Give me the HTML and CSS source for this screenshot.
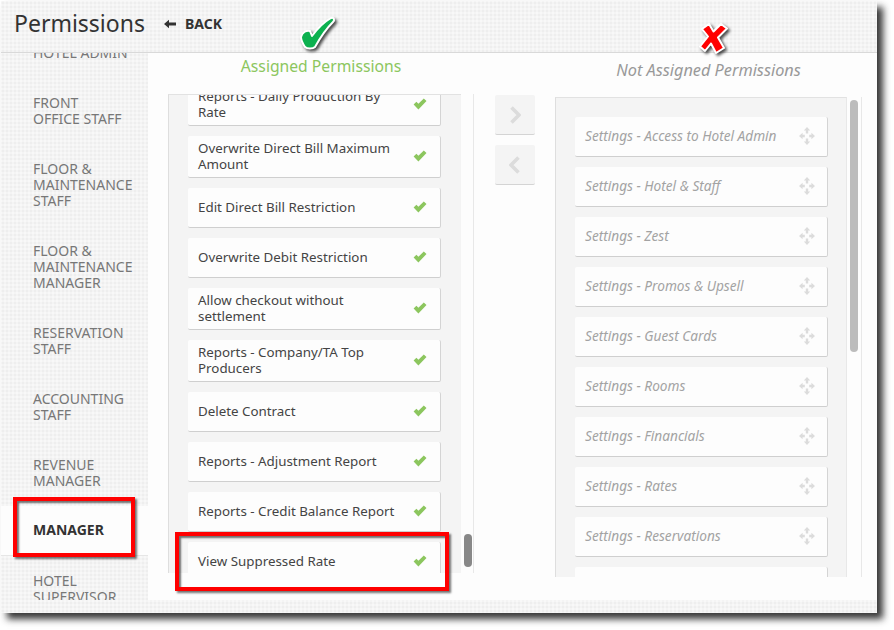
FILE: index.html
```html
<!DOCTYPE html>
<html lang="en">
<head>
<meta charset="utf-8">
<title>Permissions</title>
<link rel="stylesheet" href="styles.css">
</head>
<body>
<svg class="sprite" width="0" height="0" aria-hidden="true">
  <symbol id="tick" viewBox="0 0 14 12"><path d="M.6 6.4 L3.4 3.8 L5.4 5.8 L10.8 .5 L13.5 3 L5.4 11.4 Z" fill="currentColor"/></symbol>
  <symbol id="move" viewBox="0 0 16 18"><path d="M8 0 L11.2 3.6 H9.2 V6.4 H6.8 V3.6 H4.8 Z M8 18 L4.8 14.4 H6.8 V11.6 H9.2 V14.4 H11.2 Z M0 9 L3.6 5.8 V7.8 H5.8 V10.2 H3.6 V12.2 Z M16 9 L12.4 12.2 V10.2 H10.2 V7.8 H12.4 V5.8 Z" fill="currentColor"/></symbol>
</svg>
<div class="window">
  <header class="topbar">
    <h1 class="page-title">Permissions</h1>
    <a class="back" href="#">
      <svg class="back-arrow" viewBox="0 0 12 10"><path d="M0 5 L5 .8 V3.6 H12 V6.4 H5 V9.2 Z" fill="currentColor"/></svg>
      <span>BACK</span>
    </a>
  </header>
  <div class="content">
    <nav class="sidebar">
      <div class="role">HOTEL ADMIN</div>
      <div class="role">FRONT<br>OFFICE STAFF</div>
      <div class="role">FLOOR &amp;<br>MAINTENANCE<br>STAFF</div>
      <div class="role">FLOOR &amp;<br>MAINTENANCE<br>MANAGER</div>
      <div class="role">RESERVATION<br>STAFF</div>
      <div class="role">ACCOUNTING<br>STAFF</div>
      <div class="role">REVENUE<br>MANAGER</div>
      <div class="role role-active">MANAGER</div>
      <div class="role">HOTEL<br>SUPERVISOR</div>
    </nav>
    <main class="panel">
      <section class="col col-assigned">
        <h2 class="col-title title-on">Assigned Permissions</h2>
        <div class="list-wrap list-wrap-on">
          <div class="list list-on">
            <div class="card card-first"><span>Reports - Daily Production By Rate</span><svg class="tick"><use href="#tick"/></svg></div>
            <div class="card"><span>Overwrite Direct Bill Maximum Amount</span><svg class="tick"><use href="#tick"/></svg></div>
            <div class="card"><span>Edit Direct Bill Restriction</span><svg class="tick"><use href="#tick"/></svg></div>
            <div class="card"><span>Overwrite Debit Restriction</span><svg class="tick"><use href="#tick"/></svg></div>
            <div class="card"><span>Allow checkout without settlement</span><svg class="tick"><use href="#tick"/></svg></div>
            <div class="card"><span>Reports - Company/TA Top Producers</span><svg class="tick"><use href="#tick"/></svg></div>
            <div class="card"><span>Delete Contract</span><svg class="tick"><use href="#tick"/></svg></div>
            <div class="card"><span>Reports - Adjustment Report</span><svg class="tick"><use href="#tick"/></svg></div>
            <div class="card"><span>Reports - Credit Balance Report</span><svg class="tick"><use href="#tick"/></svg></div>
            <div class="card"><span>View Suppressed Rate</span><svg class="tick"><use href="#tick"/></svg></div>
          </div>
          <div class="track"><div class="thumb thumb-on"></div></div>
        </div>
      </section>
      <div class="movers">
        <button class="mover" type="button"><svg viewBox="0 0 12 18"><path d="M2.5 1.5 L10 9 L2.5 16.5" fill="none" stroke="currentColor" stroke-width="3.6"/></svg></button>
        <button class="mover" type="button"><svg viewBox="0 0 12 18"><path d="M9.5 1.5 L2 9 L9.5 16.5" fill="none" stroke="currentColor" stroke-width="3.6"/></svg></button>
      </div>
      <section class="col col-free">
        <h2 class="col-title title-off">Not Assigned Permissions</h2>
        <div class="list-wrap list-wrap-off">
          <div class="list list-off">
            <div class="card card-off"><span>Settings - Access to Hotel Admin</span><svg class="move"><use href="#move"/></svg></div>
            <div class="card card-off"><span>Settings - Hotel &amp; Staff</span><svg class="move"><use href="#move"/></svg></div>
            <div class="card card-off"><span>Settings - Zest</span><svg class="move"><use href="#move"/></svg></div>
            <div class="card card-off"><span>Settings - Promos &amp; Upsell</span><svg class="move"><use href="#move"/></svg></div>
            <div class="card card-off"><span>Settings - Guest Cards</span><svg class="move"><use href="#move"/></svg></div>
            <div class="card card-off"><span>Settings - Rooms</span><svg class="move"><use href="#move"/></svg></div>
            <div class="card card-off"><span>Settings - Financials</span><svg class="move"><use href="#move"/></svg></div>
            <div class="card card-off"><span>Settings - Rates</span><svg class="move"><use href="#move"/></svg></div>
            <div class="card card-off"><span>Settings - Reservations</span><svg class="move"><use href="#move"/></svg></div>
            <div class="card card-off"></div>
          </div>
          <div class="track"><div class="thumb thumb-off"></div></div>
        </div>
      </section>
    </main>
  </div>
  <svg class="mark mark-check" viewBox="0 0 38 36"><path d="M3 21 C4 16 9 14 12 15 L14 20 C20 12 26 6 33 2 C36 1 37 4 35 6 C28 13 22 22 17 31 C15 33 9 33 7 31 C5 28 3 24 3 21 Z" fill="#0cb14f" stroke="#fff" stroke-width="2" stroke-linejoin="round"/></svg>
  <svg class="mark mark-cross" viewBox="0 0 30 32"><path d="M3 7 L10 2 L14.5 9.5 L22 2 L28 6.5 L19 15.5 L25 26 L17 31 L12 21.5 L6 29 L1 24.5 L9 14.5 Z" fill="#f00" stroke="#fff" stroke-width="2" stroke-linejoin="round"/></svg>
  <div class="callout callout-role"></div>
  <div class="callout callout-card"></div>
</div>
</body>
</html>
```
FILE: styles.css
```css
* { box-sizing: border-box; }
html, body { margin: 0; padding: 0; background: #fff; }
body { width: 894px; height: 630px; overflow: hidden; font-family: "Noto Sans", "Open Sans", sans-serif; }
.sprite { position: absolute; }

.window {
  position: relative;
  width: 876px;
  height: 612px;
  margin: 1px 0 0 1px;
  display: flex;
  flex-direction: column;
  background-color: #f4f4f4;
  background-image: radial-gradient(#eeeeee .8px, transparent 1px), radial-gradient(#f8f8f8 .8px, transparent 1px);
  background-size: 4px 4px;
  background-position: 0 0, 2px 2px;
  box-shadow: 6px 6px 7px rgba(20, 20, 20, .85);
}

.topbar {
  height: 52px;
  flex: none;
  display: flex;
  align-items: center;
  padding: 0 0 8px 13px;
  border-bottom: 1px solid #d9d9d9;
}
.page-title { margin: 0; font-size: 23px; font-weight: 400; color: #333; line-height: 32px; }
.back {
  display: flex;
  align-items: center;
  margin: 2px 0 0 19px;
  color: #333;
  font-size: 14px;
  font-weight: 700;
  text-decoration: none;
}
.back-arrow { width: 12px; height: 10px; margin-right: 9px; }

.content { flex: none; height: 547px; display: flex; }

.sidebar { width: 147px; flex: none; overflow: hidden; }
.role {
  padding: 17px 0 17px 32px;
  font-size: 14px;
  line-height: 16px;
  color: #777;
}
.role:first-child { margin-top: -25px; }
.role-active {
  background: #fdfdfd;
  color: #333;
  font-weight: 700;
  border-bottom: 1px solid #e6e6e6;
  padding: 16px 0 17px 32px;
}

.panel { flex: 1; background: #fdfdfd; display: flex; padding-left: 20px; }
.col { flex: none; }
.col-assigned { width: 306px; }
.col-free { width: 307px; padding-top: 4px; margin-left: 20px; }
.col-title {
  margin: 0;
  height: 26px;
  font-weight: 400;
  line-height: 26px;
  text-align: center;
}
.title-on { color: #8cc65e; font-size: 15.7px; margin-bottom: 15px; }
.title-off { color: #999; font-size: 16.3px; font-style: italic; margin-bottom: 14px; }

.list-wrap { display: flex; }
.list-wrap-on { height: 479px; }
.list-wrap-off { height: 480px; }
.list {
  flex: none;
  overflow: hidden;
  background: #f4f4f4;
  border-left: 1px solid #dedede;
  border-top: 1px solid #e2e2e2;
  display: flex;
  flex-direction: column;
  gap: 10px;
}
.list-on { width: 293px; padding: 0 20px 0 19px; }
.list-off { width: 292px; padding: 19px 18px 0 19px; border-right: 1px solid #e8e8e8; }

.card {
  flex: none;
  min-height: 40px;
  padding: 4px 13px 5px 10px;
  display: flex;
  align-items: center;
  justify-content: space-between;
  background: #fdfdfd;
  border-right: 1px solid #d4d4d4;
  border-bottom: 1px solid #cfcfcf;
  border-radius: 2px;
  color: #444;
  font-size: 13.35px;
  line-height: 16px;
}
.card span { max-width: 210px; }
.card-first { margin-top: -11px; }
.card-off { color: #a3a3a3; font-style: italic; font-size: 13.65px; padding-right: 12px; }
.card-off span { max-width: 215px; }

.tick { width: 14px; height: 12px; flex: none; color: #8cc65e; }
.move { width: 16px; height: 18px; flex: none; color: #dcdcdc; }

.track { flex: 1; border-right: 1px solid #e8e8e8; padding-left: 3px; }
.thumb { width: 8px; border-radius: 4px; }
.thumb-on { height: 33px; margin-top: 440px; background: #888; }
.thumb-off { height: 252px; margin-top: 3px; background: #bcbcbc; }

.movers { flex: none; width: 40px; margin-left: 21px; padding-top: 42px; display: flex; flex-direction: column; gap: 10px; }
.mover {
  width: 40px;
  height: 40px;
  padding: 0;
  display: flex;
  align-items: center;
  justify-content: center;
  background: #f4f4f4;
  border: 0;
  border-bottom: 1px solid #d4d4d4;
  border-radius: 2px;
  color: #dcdcdc;
}
.mover svg { width: 12px; height: 18px; }

.mark { position: absolute; filter: drop-shadow(2px 2px 1.5px rgba(0, 0, 0, .7)); }
.mark-check { left: 297px; top: 15px; width: 38px; height: 36px; }
.mark-cross { left: 698px; top: 21px; width: 30px; height: 32px; }

.callout {
  position: absolute;
  border: 4px solid #f00;
  box-shadow: 2px 2px 2px rgba(0, 0, 0, .55), inset 2px 2px 2px rgba(0, 0, 0, .55);
}
.callout-role { left: 12px; top: 496px; width: 122px; height: 60px; }
.callout-card { left: 174px; top: 531px; width: 274px; height: 59px; }
```
